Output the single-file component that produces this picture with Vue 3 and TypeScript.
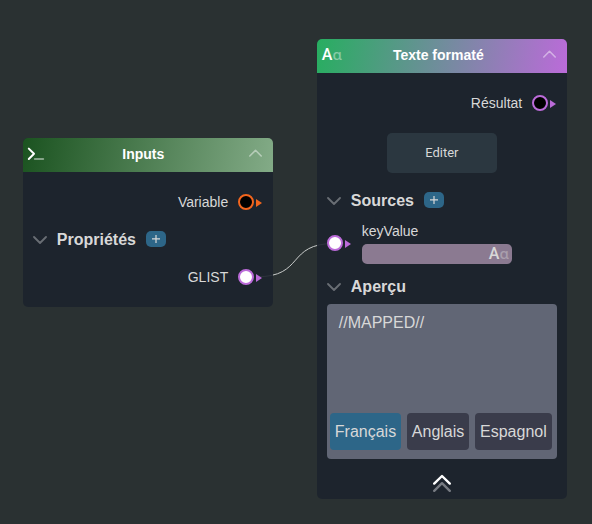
<script setup lang="ts">
import { ref } from 'vue'

const languages = ['Français', 'Anglais', 'Espagnol']
const active = ref('Français')
</script>

<template>
  <main class="canvas">
    <svg class="wire" width="592" height="524" viewBox="0 0 592 524">
      <path d="M257 276.8 C305 276.8 286 243.5 334 243.5" />
    </svg>

    <section class="node inputs">
      <header>
        <svg class="type" width="20" height="20" viewBox="0 0 20 20">
          <path class="thick" d="M2.8 4.6 8 9.8 2.8 15" />
          <path class="faded" d="M8.8 15h8.4" />
        </svg>
        <h1>Inputs</h1>
        <svg class="fold" width="13" height="8" viewBox="0 0 13 8"><path d="M.8 7 6.5 1.3 12.2 7" /></svg>
      </header>
      <div class="port-row variable">
        <span>Variable</span>
        <i class="port orange"></i><i class="arrow orange"></i>
      </div>
      <div class="group props">
        <svg width="14" height="8" viewBox="0 0 14 8"><path d="M1 1 7 7 13 1" /></svg>
        <h2>Propriétés</h2>
        <button class="add"><svg width="10" height="10" viewBox="0 0 10 10"><path d="M1 4.9h8M5 .9v8" /></svg></button>
      </div>
      <div class="port-row glist">
        <span>GLIST</span>
        <i class="port filled"></i><i class="arrow"></i>
      </div>
    </section>

    <section class="node formatted">
      <header>
        <span class="letters"><b>A</b><em>ɑ</em></span>
        <h1>Texte formaté</h1>
        <svg class="fold" width="13" height="8" viewBox="0 0 13 8"><path d="M.8 7 6.5 1.3 12.2 7" /></svg>
      </header>
      <div class="port-row result">
        <span>Résultat</span>
        <i class="port"></i><i class="arrow"></i>
      </div>
      <button class="edit">Editer</button>
      <div class="group sources">
        <svg width="14" height="8" viewBox="0 0 14 8"><path d="M1 1 7 7 13 1" /></svg>
        <h2>Sources</h2>
        <button class="add"><svg width="10" height="10" viewBox="0 0 10 10"><path d="M1 4.9h8M5 .9v8" /></svg></button>
      </div>
      <div class="source">
        <i class="port filled"></i><i class="arrow"></i>
        <div class="field">
          <label>keyValue</label>
          <div class="slot"><span class="letters"><b>A</b><em>ɑ</em></span></div>
        </div>
      </div>
      <div class="group preview-title">
        <svg width="14" height="8" viewBox="0 0 14 8"><path d="M1 1 7 7 13 1" /></svg>
        <h2>Aperçu</h2>
      </div>
      <div class="preview">
        <p>//MAPPED//</p>
        <nav>
          <button v-for="lang in languages" :key="lang" :class="{ active: lang === active }" @click="active = lang">{{ lang }}</button>
        </nav>
      </div>
      <svg class="collapse" width="20" height="19" viewBox="0 0 20 19">
        <path class="back" d="M2.2 16.8 10 9.2 17.8 16.8" />
        <path class="front" d="M2.2 9.6 10 2 17.8 9.6" />
      </svg>
    </section>
  </main>
</template>

<style>
body {
  background: #2a3132;
}
</style>

<style scoped>
* {
  box-sizing: border-box;
}
.canvas {
  position: relative;
  width: 592px;
  height: 524px;
  overflow: hidden;
  background: #2a3132;
  color: #d8d8d8;
  font: 14px/20px "Liberation Sans", Arial, sans-serif;
}
svg {
  display: block;
  flex: none;
  fill: none;
  stroke-linecap: round;
  stroke-linejoin: round;
}
.wire {
  position: absolute;
  inset: 0;
  stroke: #c9cccb;
  stroke-width: 1;
}
.node {
  position: absolute;
  display: flex;
  flex-direction: column;
  width: 250px;
  border-radius: 5px;
  overflow: hidden;
  background: rgba(29, 35, 45, 0.91);
}
.inputs {
  left: 22.8px;
  top: 137.7px;
  height: 169.3px;
}
.formatted {
  left: 316.8px;
  top: 38.7px;
  height: 460.3px;
}
header {
  display: grid;
  grid-template-columns: 34px 1fr 34px;
  align-items: center;
  flex: none;
  height: 34.3px;
  color: #fff;
}
.inputs header {
  background: linear-gradient(100deg, #1b5320, #83ab87);
}
.formatted header {
  background: linear-gradient(100deg, #27ae60, #bb6bd9);
}
h1 {
  margin: -2px 0 0;
  padding-right: 9px;
  text-align: center;
  font-size: 14px;
  line-height: 20px;
}
.formatted h1 {
  padding-right: 7px;
}
.type {
  margin-left: 3px;
  margin-top: -1px;
  stroke: #fff;
  stroke-width: 2;
}
.faded {
  opacity: 0.45;
}
.fold {
  margin-left: 10px;
  margin-top: -3px;
  stroke: #fff;
  stroke-width: 1.6;
  opacity: 0.45;
}
.letters {
  display: flex;
  align-items: baseline;
  font: 500 16px/20px Roboto, sans-serif;
}
.letters b {
  font-weight: 500;
}
.letters em {
  font: 500 15px/20px "Noto Sans", sans-serif;
  opacity: 0.4;
}
header .letters {
  margin-left: 5px;
  margin-top: -2px;
}
.port-row {
  display: flex;
  align-items: center;
  justify-content: flex-end;
  flex: none;
  height: 20px;
  padding-right: 10.6px;
}
.port-row span {
  margin-right: 10px;
}
.variable,
.result {
  margin-top: 20px;
}
.port {
  flex: none;
  width: 16px;
  height: 16px;
  margin-top: 0.6px;
  border: 2px solid #bb6bd9;
  border-radius: 50%;
  background: #000;
}
.port.filled {
  background: #fff;
}
.port.orange {
  border-color: #f2651d;
}
.arrow {
  flex: none;
  margin-left: 2px;
  margin-top: 1.4px;
  border: solid transparent;
  border-width: 4px 0 4px 6px;
  border-left-color: #bb6bd9;
}
.arrow.orange {
  border-left-color: #f2651d;
}
.group {
  display: flex;
  align-items: center;
  flex: none;
  height: 20px;
  padding-left: 10px;
}
.group > svg {
  margin-top: 2px;
  stroke: #696e74;
  stroke-width: 1.8;
}
h2 {
  margin: 2px 0 0 10px;
  font-size: 16px;
  line-height: 20px;
}
button {
  margin: 0;
  padding: 0;
  border: 0;
  color: inherit;
}
.add {
  display: grid;
  place-items: center;
  width: 20px;
  height: 16px;
  margin-top: 0.6px;
  margin-left: 10px;
  border-radius: 5px;
  background: #2d6688;
}
.add svg {
  stroke: #d8d8d8;
  stroke-width: 1.2;
  stroke-linecap: butt;
}
.props {
  margin-top: 17px;
}
.glist {
  margin-top: 18px;
}
.edit {
  align-self: center;
  flex: none;
  width: 110px;
  height: 40px;
  margin-top: 20.2px;
  border-radius: 5px;
  background: #2b3740;
  font: 13px/20px Roboto, sans-serif;
}
.sources {
  margin-top: 16.8px;
}
.source {
  display: flex;
  flex: none;
  height: 44px;
  margin-top: 11px;
  padding-left: 10px;
}
.source .port {
  margin-top: 14.3px;
}
.source .arrow {
  align-self: flex-start;
  margin-top: 19px;
}
.field {
  width: 150px;
  margin-left: 11px;
}
label {
  display: block;
  height: 23px;
}
.slot {
  display: flex;
  align-items: center;
  justify-content: flex-end;
  height: 20px;
  padding-right: 3px;
  border-radius: 5px;
  background: #8b7a91;
}
.preview-title {
  margin-top: 11px;
}
.preview {
  display: flex;
  flex-direction: column;
  justify-content: space-between;
  flex: none;
  width: 230px;
  height: 155px;
  margin: 8.3px 10px 0;
  padding: 9px 3px 9px;
  border-radius: 4px;
  background: #616675;
  font-size: 16px;
}
.preview p {
  margin: 0 9px;
}
nav {
  display: flex;
  gap: 5.7px;
}
nav button {
  height: 37px;
  padding: 0 5px;
  border-radius: 4px;
  background: #3a3c4b;
  font: 16px/20px "Liberation Sans", Arial, sans-serif;
}
nav .active {
  background: #2d6688;
}
.collapse {
  align-self: center;
  margin-top: 14.6px;
  stroke-width: 2.4;
}
.front {
  stroke: #fff;
}
.back {
  stroke: #777b82;
}
</style>
